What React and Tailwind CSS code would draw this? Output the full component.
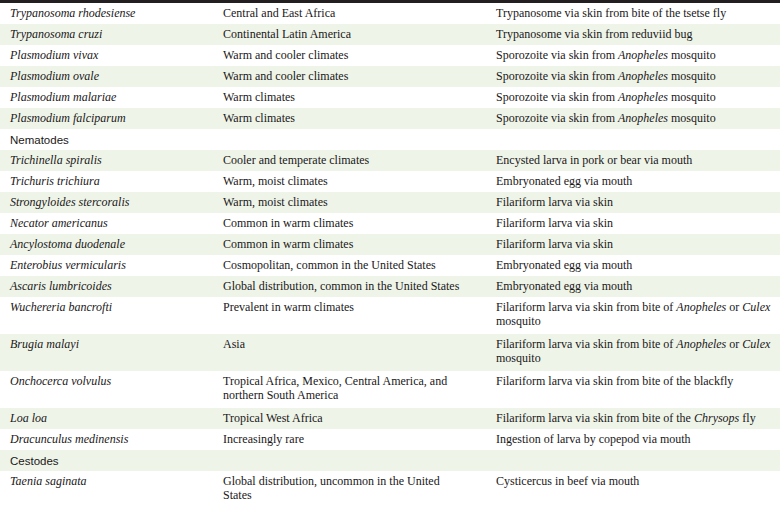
import React from "react";

// Parasite table — rows alternate white / pale green, section headers in sans.
const rows = [
  { name: "Trypanosoma rhodesiense", where: ["Central and East Africa"], how: [["Trypanosome via skin from bite of the tsetse fly"]] },
  { name: "Trypanosoma cruzi", where: ["Continental Latin America"], how: [["Trypanosome via skin from reduviid bug"]] },
  { name: "Plasmodium vivax", where: ["Warm and cooler climates"], how: [["Sporozoite via skin from ", <i key="a">Anopheles</i>, " mosquito"]] },
  { name: "Plasmodium ovale", where: ["Warm and cooler climates"], how: [["Sporozoite via skin from ", <i key="a">Anopheles</i>, " mosquito"]] },
  { name: "Plasmodium malariae", where: ["Warm climates"], how: [["Sporozoite via skin from ", <i key="a">Anopheles</i>, " mosquito"]] },
  { name: "Plasmodium falciparum", where: ["Warm climates"], how: [["Sporozoite via skin from ", <i key="a">Anopheles</i>, " mosquito"]] },
  { header: "Nematodes" },
  { name: "Trichinella spiralis", where: ["Cooler and temperate climates"], how: [["Encysted larva in pork or bear via mouth"]] },
  { name: "Trichuris trichiura", where: ["Warm, moist climates"], how: [["Embryonated egg via mouth"]] },
  { name: "Strongyloides stercoralis", where: ["Warm, moist climates"], how: [["Filariform larva via skin"]] },
  { name: "Necator americanus", where: ["Common in warm climates"], how: [["Filariform larva via skin"]] },
  { name: "Ancylostoma duodenale", where: ["Common in warm climates"], how: [["Filariform larva via skin"]] },
  { name: "Enterobius vermicularis", where: ["Cosmopolitan, common in the United States"], how: [["Embryonated egg via mouth"]] },
  { name: "Ascaris lumbricoides", where: ["Global distribution, common in the United States"], how: [["Embryonated egg via mouth"]] },
  { name: "Wuchereria bancrofti", where: ["Prevalent in warm climates"], how: [["Filariform larva via skin from bite of ", <i key="a">Anopheles</i>, " or ", <i key="b">Culex</i>], ["mosquito"]], tall: true },
  { name: "Brugia malayi", where: ["Asia"], how: [["Filariform larva via skin from bite of ", <i key="a">Anopheles</i>, " or ", <i key="b">Culex</i>], ["mosquito"]], tall: true },
  { name: "Onchocerca volvulus", where: ["Tropical Africa, Mexico, Central America, and", "northern South America"], how: [["Filariform larva via skin from bite of the blackfly"]], tall: true },
  { name: "Loa loa", where: ["Tropical West Africa"], how: [["Filariform larva via skin from bite of the ", <i key="a">Chrysops</i>, " fly"]] },
  { name: "Dracunculus medinensis", where: ["Increasingly rare"], how: [["Ingestion of larva by copepod via mouth"]] },
  { header: "Cestodes" },
  { name: "Taenia saginata", where: ["Global distribution, uncommon in the United", "States"], how: [["Cysticercus in beef via mouth"]], tall: true },
];

function Lines({ lines }) {
  return lines.map((l, i) => (
    <div key={i} className="whitespace-nowrap">{l}</div>
  ));
}

export default function App() {
  return (
    <div className="w-[780px] h-[505px] overflow-hidden bg-white text-[#1a1718] text-[12px] leading-[14px] font-['Liberation_Serif',serif]">
      <div className="h-[3px] bg-[#231f20]" />
      {rows.map((r, i) => {
        const bg = i % 2 === 1 ? "bg-[#eef4e8]" : "bg-white";
        if (r.header) {
          return (
            <div key={i} className={`h-[21px] flex items-center pl-[10px] ${bg} text-[11.5px] font-['Liberation_Sans',sans-serif]`}>
              {r.header}
            </div>
          );
        }
        return (
          <div key={i} className={`grid grid-cols-[223px_273px_1fr] pt-[3px] ${r.tall ? "h-[37px]" : "h-[21px]"} ${bg}`}>
            <div className="pl-[10px] italic whitespace-nowrap">{r.name}</div>
            <div><Lines lines={r.where} /></div>
            <div><Lines lines={r.how} /></div>
          </div>
        );
      })}
    </div>
  );
}
